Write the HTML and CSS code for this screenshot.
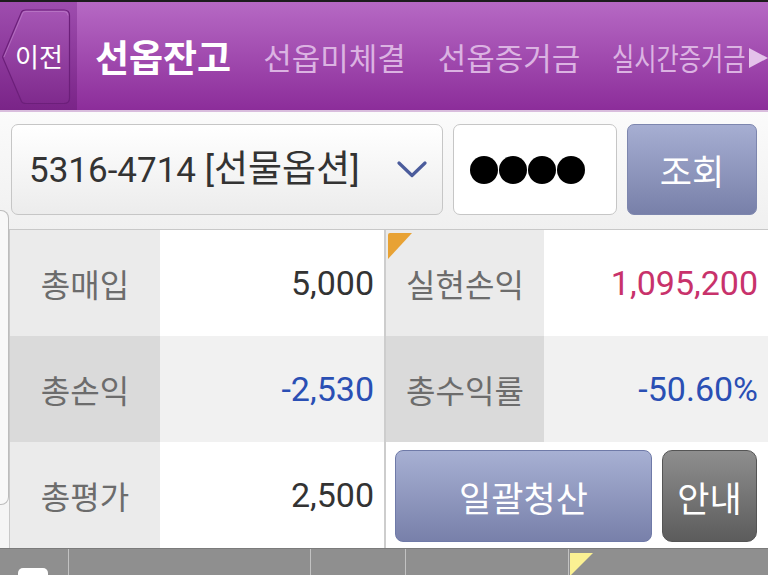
FILE: index.html
```html
<!DOCTYPE html>
<html lang="ko">
<head>
<meta charset="utf-8">
<title>선옵잔고</title>
<link rel="stylesheet" href="styles.css">
</head>
<body>
<div class="app">
  <header class="topbar">
    <div class="back">
      <svg class="back-shape" width="77" height="108" viewBox="0 0 77 108">
        <defs>
          <linearGradient id="bg" x1="0" y1="0" x2="0" y2="1">
            <stop offset="0" stop-color="#a656b5"/>
            <stop offset="1" stop-color="#7f2a8d"/>
          </linearGradient>
        </defs>
        <path d="M2.5,55 L21.5,10 Q22.5,8 26,8 L64,8 Q69.5,8 69.5,13.5 L69.5,96 Q69.5,101.5 64,101.5 L26,101.5 Q22.5,101.5 21.5,99.5 Z" fill="url(#bg)" stroke="#6c1f7a" stroke-width="1.2"/>
        <path d="M4,55 L22.8,11 Q23.5,9.5 26,9.5 L64,9.5 Q68,9.5 68,13.5" fill="none" stroke="#c48bd0" stroke-opacity="0.55" stroke-width="1"/>
      </svg>
      <span class="back-label">이전</span>
    </div>
    <nav class="tabs">
      <span class="tab active">선옵잔고</span>
      <span class="tab">선옵미체결</span>
      <span class="tab">선옵증거금</span>
      <span class="tab condensed">실시간증거금</span>
    </nav>
    <span class="more-arrow"></span>
  </header>

  <section class="query">
    <div class="select">
      <span class="select-text">5316-4714 [<span class="ko">선물옵션</span>]</span>
      <svg class="chevron" width="30" height="17" viewBox="0 0 30 17">
        <path d="M2,2 L15,14.5 L28,2" fill="none" stroke="#4b5c9c" stroke-width="3.2" stroke-linecap="round" stroke-linejoin="round"/>
      </svg>
    </div>
    <div class="pw"><i class="dot"></i><i class="dot"></i><i class="dot"></i><i class="dot"></i></div>
    <button class="btn-query">조회</button>
  </section>

  <section class="summary">
    <div class="cell label r1">총매입</div>
    <div class="cell value r1">5,000</div>
    <div class="cell label r1 split"><span class="flag"></span>실현손익</div>
    <div class="cell value r1 pink">1,095,200</div>

    <div class="cell label r2">총손익</div>
    <div class="cell value r2 blue">-2,530</div>
    <div class="cell label r2 split">총수익률</div>
    <div class="cell value r2 blue">-50.60%</div>

    <div class="cell label r1">총평가</div>
    <div class="cell value r1">2,500</div>
    <div class="actions split">
      <button class="btn-settle">일괄청산</button>
      <button class="btn-guide">안내</button>
    </div>
  </section>

  <footer class="strip">
    <div class="strip-cell c1"><span class="check"></span></div>
    <div class="strip-cell c2"></div>
    <div class="strip-cell c3"></div>
    <div class="strip-cell c4"></div>
    <div class="strip-cell c5"><span class="flag-yellow"></span></div>
  </footer>

  <div class="drawer-handle"></div>
</div>
</body>
</html>
```

FILE: styles.css
```css
* { box-sizing: border-box; }

html, body {
  margin: 0;
  padding: 0;
  width: 768px;
  height: 575px;
  overflow: hidden;
  background: #f5f5f5;
  font-family: "Roboto", "Noto Sans CJK KR", sans-serif;
}

.app {
  position: relative;
  width: 768px;
  height: 575px;
  overflow: hidden;
}

/* ---------- top bar ---------- */
.topbar {
  position: relative;
  display: flex;
  height: 112px;
  border-top: 2px solid #1c1c1c;
  border-bottom: 2px solid #d9bddd;
  background: linear-gradient(#b669c4, #8c2d9a);
  overflow: hidden;
}

.back {
  position: relative;
  flex: 0 0 77px;
  display: flex;
  align-items: center;
  justify-content: center;
  background: linear-gradient(#9e4dae, #7a2488);
}

.back-shape {
  position: absolute;
  left: 0;
  top: 0;
}

.back-label {
  position: relative;
  padding-left: 1px;
  color: #ffffff;
  font-family: "Noto Sans CJK KR", sans-serif;
  font-size: 26px;
  line-height: 1;
}

.tabs {
  display: flex;
  align-items: center;
  gap: 32px;
  padding-left: 18px;
  white-space: nowrap;
}

.tab {
  font-family: "Noto Sans CJK KR", sans-serif;
  font-size: 31px;
  line-height: 1;
  color: #dbb3e2;
}

.tab.active {
  font-size: 37px;
  font-weight: 700;
  color: #ffffff;
}

.tab.condensed {
  display: inline-block;
  transform: scaleX(0.78);
  transform-origin: left center;
}

.more-arrow {
  position: absolute;
  right: 0;
  top: 46px;
  width: 0;
  height: 0;
  border-top: 10px solid transparent;
  border-bottom: 10px solid transparent;
  border-left: 19px solid #e4c2ea;
}

/* ---------- query row ---------- */
.query {
  display: flex;
  gap: 10px;
  padding: 12px 11px 14px 11px;
  height: 117px;
  background: linear-gradient(#fbfbfb, #f0f0f0);
}

.select {
  flex: 1;
  display: flex;
  align-items: center;
  padding-left: 17px;
  padding-right: 15px;
  border: 1px solid #c6c6c6;
  border-radius: 7px;
  background: linear-gradient(#ffffff, #ececec);
}

.select-text {
  font-size: 35px;
  line-height: 1;
  color: #333333;
}

.select-text .ko {
  font-size: 37px;
}

.chevron {
  margin-left: auto;
}

.pw {
  flex: 0 0 164px;
  display: flex;
  align-items: center;
  gap: 1px;
  padding-left: 16px;
  border: 1px solid #c6c6c6;
  border-radius: 7px;
  background: #ffffff;
}

.dot {
  display: block;
  width: 28px;
  height: 28px;
  border-radius: 50%;
  background: #000000;
}

.btn-query {
  flex: 0 0 130px;
  border: 1px solid #7d86ae;
  border-radius: 7px;
  background: linear-gradient(#a6aed2, #7880a9);
  color: #ffffff;
  font-family: "Noto Sans CJK KR", sans-serif;
  font-size: 35px;
  line-height: 1;
  padding: 0;
}

/* ---------- summary grid ---------- */
.summary {
  display: grid;
  grid-template-columns: 150px 224px 160px 224px;
  grid-template-rows: 106px 106px 106px;
  margin-left: 9px;
  border-left: 1px solid #c8c8c8;
  border-top: 1px solid #c8c8c8;
  background: #ffffff;
}

.cell {
  display: flex;
  align-items: center;
  line-height: 1;
}

.cell.label {
  position: relative;
  justify-content: center;
  font-family: "Noto Sans CJK KR", sans-serif;
  font-size: 32px;
  color: #6c6c6c;
}

.cell.value {
  justify-content: flex-end;
  padding-right: 10px;
  font-size: 34px;
  color: #333333;
}

.label.r1 { background: #ebebeb; }
.label.r2 { background: #dadada; }
.value.r1 { background: #ffffff; }
.value.r2 { background: #f1f1f1; }

.split { border-left: 2px solid #cdcdcd; }

.pink { color: #c8326b !important; }
.blue { color: #2a4fb4 !important; }

.flag {
  position: absolute;
  left: 2px;
  top: 3px;
  width: 24px;
  height: 26px;
  background: #e8a234;
  clip-path: polygon(0 0, 100% 0, 0 100%);
  border-top-left-radius: 2px;
}

.actions {
  grid-column: 3 / 5;
  display: flex;
  gap: 10px;
  padding: 8px 11px 6px 9px;
  background: #ffffff;
}

.btn-settle,
.btn-guide {
  padding: 0;
  color: #ffffff;
  font-family: "Noto Sans CJK KR", sans-serif;
  font-size: 35px;
  line-height: 1;
}

.btn-settle {
  flex: 1;
  border: 1px solid #6f7aa8;
  border-radius: 8px;
  background: linear-gradient(#a7b0d3, #7880aa);
}

.btn-guide {
  flex: 0 0 95px;
  border: 1px solid #555555;
  border-radius: 10px;
  background: linear-gradient(#8e8e8e, #5c5c5c);
}

/* ---------- bottom strip ---------- */
.strip {
  display: flex;
  height: 27px;
  border-top: 1px solid #7b7b7b;
  background: #8f8f8f;
  overflow: hidden;
}

.strip-cell {
  position: relative;
  height: 100%;
  border-right: 1px solid #c2c2c2;
}

.strip-cell.c1 { flex: 0 0 69px; }
.strip-cell.c2 { flex: 0 0 242px; }
.strip-cell.c3 { flex: 0 0 95px; }
.strip-cell.c4 { flex: 0 0 163px; }
.strip-cell.c5 { flex: 1; border-right: none; }

.check {
  position: absolute;
  left: 18px;
  top: 19px;
  width: 30px;
  height: 30px;
  border-radius: 5px;
  background: #ffffff;
}

.flag-yellow {
  position: absolute;
  left: 1px;
  top: 4px;
  width: 23px;
  height: 23px;
  background: #fbf193;
  clip-path: polygon(0 0, 100% 0, 0 100%);
}

/* ---------- drawer handle on the left edge ---------- */
.drawer-handle {
  position: absolute;
  left: 0;
  top: 210px;
  width: 9px;
  height: 295px;
  background: #f8f8f8;
  border: 1px solid #bcbcbc;
  border-left: none;
  border-radius: 0 8px 8px 0;
}
```
